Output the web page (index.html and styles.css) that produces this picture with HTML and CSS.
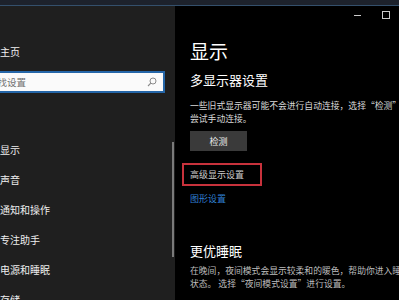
FILE: index.html
```html
<!DOCTYPE html>
<html lang="zh-CN">
<head>
    <meta charset="UTF-8">
    <meta name="viewport" content="width=device-width, initial-scale=1.0">
    <title>设置 - 显示</title>
    <link rel="stylesheet" href="styles.css">
</head>
<body>
    <div class="taskbar"></div>
    <div class="window">
        <div class="sidebar">
            <div class="home">主页</div>
            <div class="search">
                <span class="search-text">查找设置</span>
                <svg class="search-icon" width="10" height="10" viewBox="0 0 10 10">
                    <circle cx="6" cy="4" r="3" fill="none" stroke="#8a8a8a" stroke-width="1"/>
                    <path d="M3.8 6.2 L1 9" stroke="#8a8a8a" stroke-width="1.1"/>
                </svg>
            </div>
            <div class="group">系统</div>
            <ul class="nav">
                <li>显示</li>
                <li>声音</li>
                <li>通知和操作</li>
                <li>专注助手</li>
                <li>电源和睡眠</li>
                <li>存储</li>
            </ul>
            <div class="scrollbar"></div>
        </div>
        <div class="main">
            <div class="titlebar">
                <span class="min"></span>
                <span class="max"></span>
            </div>
            <h1>显示</h1>
            <h2>多显示器设置</h2>
            <p class="note">一些旧式显示器可能不会进行自动连接，选择“检测”即可尝试手动连接。<br>尝试手动连接。</p>
            <button class="detect">检测</button>
            <div class="advanced">高级显示设置</div>
            <a class="link" href="#graphics">图形设置</a>
            <h2 class="sleep">更优睡眠</h2>
            <p class="note">在晚间，夜间模式会显示较柔和的暖色，帮助你进入睡眠<br>状态。 选择“夜间模式设置”进行设置。</p>
        </div>
    </div>
</body>
</html>
```

FILE: styles.css
```css
* {
    box-sizing: border-box;
}

body {
    margin: 0;
    width: 399px;
    height: 300px;
    overflow: hidden;
    background: #000;
    color: #fff;
    font-family: "Noto Sans CJK SC", "Noto Sans", sans-serif;
}

.taskbar {
    height: 6px;
    background: #1d222c;
    border-bottom: 1px solid #34506c;
}

.window {
    display: flex;
    height: 294px;
}

.sidebar {
    position: relative;
    width: 175px;
    flex-shrink: 0;
    background: #1f1f1f;
    overflow: hidden;
}

.home {
    margin-top: 38px;
    font-size: 10px;
    line-height: 16px;
    color: #f0f0f0;
}

.search {
    display: flex;
    align-items: center;
    justify-content: space-between;
    margin-top: 11px;
    margin-left: -20px;
    width: 185px;
    height: 22px;
    padding: 0 6px 0 6px;
    background: #fafafa;
    border: 2px solid #2566a8;
}

.search-text {
    font-size: 9.5px;
    color: #707070;
}

.group {
    margin-top: 6px;
    margin-left: -28px;
    font-size: 10px;
    line-height: 14px;
    color: #bbb;
}

.nav {
    list-style: none;
    margin: 30px 0 0 0;
    padding: 0;
}

.nav li {
    height: 30px;
    font-size: 10px;
    line-height: 14px;
    color: #eee;
}

.scrollbar {
    position: absolute;
    left: 172px;
    top: 136px;
    width: 2px;
    height: 115px;
    background: #7a7a7a;
}

.main {
    flex-grow: 1;
    padding-left: 15px;
    overflow: hidden;
    white-space: nowrap;
}

.titlebar {
    display: flex;
    justify-content: flex-end;
    align-items: center;
    gap: 21px;
    height: 18px;
    padding-right: 9px;
}

.min {
    width: 7px;
    height: 1px;
    background: #ccc;
}

.max {
    width: 8px;
    height: 8px;
    border: 1px solid #ccc;
}

h1 {
    margin: 16px 0 0 0;
    font-size: 19px;
    font-weight: 400;
    line-height: 22px;
}

h2 {
    margin: 10px 0 0 0;
    font-size: 13px;
    font-weight: 400;
    line-height: 16px;
}

.note {
    margin: 11px 0 0 0;
    font-size: 8.8px;
    line-height: 13px;
    color: #d8d8d8;
}

.detect {
    display: block;
    margin-top: 6px;
    width: 57px;
    height: 20px;
    padding: 0;
    border: none;
    background: #3a3a3a;
    color: #eee;
    font-family: inherit;
    font-size: 9px;
}

.advanced {
    margin: 12px 0 0 -8px;
    width: 80px;
    height: 23px;
    padding-left: 6px;
    border: 2px solid #c8323c;
    font-size: 9px;
    line-height: 19px;
    color: #ccc;
}

.link {
    display: block;
    margin-top: 6px;
    font-size: 9px;
    line-height: 13px;
    color: #2f7fd0;
    text-decoration: none;
}

.sleep {
    margin-top: 38px;
}

.sleep + .note {
    margin-top: 5px;
    color: #bdbdbd;
}
```
